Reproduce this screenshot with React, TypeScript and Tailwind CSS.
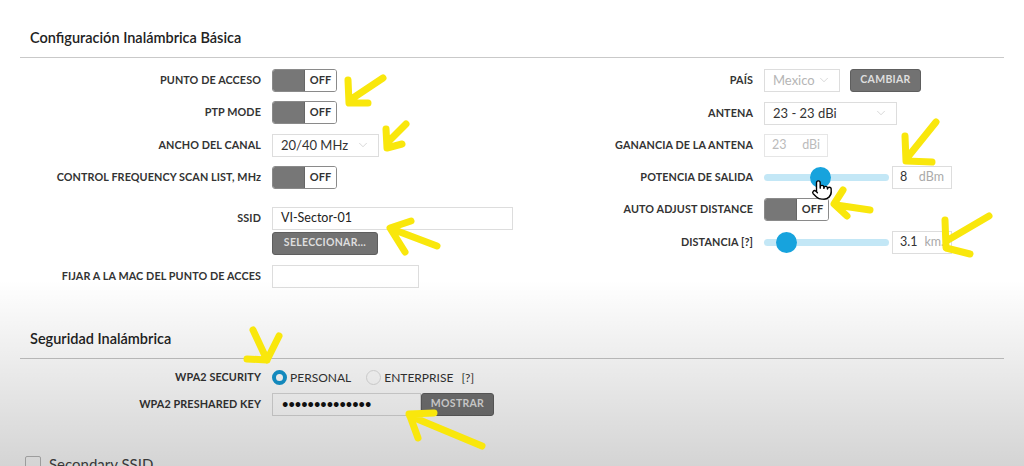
import React from 'react';
import { ChevronDown, Pointer } from 'lucide-react';

const Label: React.FC<{ w: string; children: React.ReactNode }> = ({ w, children }) => (
  <div className={`${w} shrink-0 text-right text-[10.8px] font-bold uppercase text-[#333] tracking-[0.1px]`}>{children}</div>
);

const Toggle: React.FC = () => (
  <div className="flex h-[23px] w-[65px] overflow-hidden rounded-[3px] border border-[#8a8a8a]">
    <div className="w-[32px] bg-[#777] border-r border-[#666]" />
    <div className="flex flex-1 items-center justify-center bg-white text-[11px] font-bold text-[#333]">OFF</div>
  </div>
);

const Select: React.FC<{ w: string; value: string; muted?: boolean }> = ({ w, value, muted }) => (
  <div className={`${w} flex h-[23px] items-center justify-between border border-[#ddd] bg-white pl-[8px] pr-[8px] text-[13px] ${muted ? 'text-[#b5b5b5]' : 'text-[#333]'}`}>
    <span>{value}</span>
    <ChevronDown size={14} strokeWidth={1} className="text-[#bbb]" />
  </div>
);

const Btn: React.FC<{ w: string; children: React.ReactNode }> = ({ w, children }) => (
  <div className={`${w} flex h-[23px] items-center justify-center rounded-[3px] border border-[#5e5e5e] bg-[#727272] text-[10.5px] font-bold uppercase tracking-[0.3px] text-[#dedede]`}>
    {children}
  </div>
);

const Slider: React.FC<{ pos: number }> = ({ pos }) => (
  <div className="relative flex h-[23px] w-[125px] items-center">
    <div className="h-[7px] w-full rounded-full bg-[#c3e7f6]" />
    <div
      className="absolute top-[1px] h-[21px] w-[21px] rounded-full bg-[#17a3dd]"
      style={{ left: pos }}
    />
  </div>
);

const UnitBox: React.FC<{ value: string; unit: string }> = ({ value, unit }) => (
  <div className="flex h-[23px] w-[60px] items-center justify-between border border-[#ddd] bg-white px-[7px] text-[12.5px]">
    <span className="text-[#333]">{value}</span>
    <span className="text-[#aaa]">{unit}</span>
  </div>
);

const App: React.FC = () => {
  return (
    <div className="relative h-[466px] w-[1024px] overflow-hidden bg-white font-['Lato',sans-serif] text-[#333]">
      {/* SECTION 1 */}
      <div className="mx-[20px] border-b-[1.5px] border-[#c9c9c9] pl-[10px] pt-[27px] pb-[8px] text-[14.5px] font-semibold text-[#222]">
        Configuración Inalámbrica Básica
      </div>

      <div className="flex">
        {/* LEFT COLUMN */}
        <div className="flex w-[520px] flex-col pl-[20px]">
          <div className="mt-[11px] flex items-center gap-[11px]">
            <Label w="w-[241px]">Punto de acceso</Label>
            <Toggle />
          </div>
          <div className="mt-[9px] flex items-center gap-[11px]">
            <Label w="w-[241px]">PTP Mode</Label>
            <Toggle />
          </div>
          <div className="mt-[10px] flex items-center gap-[11px]">
            <Label w="w-[241px]">Ancho del canal</Label>
            <Select w="w-[107px]" value="20/40 MHz" />
          </div>
          <div className="mt-[9px] flex items-center gap-[11px]">
            <Label w="w-[241px]">
              CONTROL FREQUENCY SCAN LIST, M<span className="normal-case">Hz</span>
            </Label>
            <Toggle />
          </div>
          <div className="mt-[18px] flex items-start gap-[11px]">
            <div className="flex h-[23px] items-center">
              <Label w="w-[241px]">SSID</Label>
            </div>
            <div className="flex flex-col gap-[2px]">
              <div className="flex h-[23px] w-[241px] items-center border border-[#ddd] bg-white px-[8px] text-[12.5px] text-[#222]">
                VI-Sector-01
              </div>
              <Btn w="w-[106px]">Seleccionar...</Btn>
            </div>
          </div>
          <div className="mt-[10px] flex items-center gap-[11px]">
            <Label w="w-[241px]">Fijar a la MAC del punto de acces</Label>
            <div className="h-[23px] w-[147px] border border-[#ddd] bg-white" />
          </div>
        </div>

        {/* RIGHT COLUMN */}
        <div className="flex flex-col">
          <div className="mt-[11px] flex items-center gap-[11px]">
            <Label w="w-[233px]">País</Label>
            <div className="flex items-center gap-[10px]">
              <Select w="w-[76px]" value="Mexico" muted />
              <Btn w="w-[71px]">Cambiar</Btn>
            </div>
          </div>
          <div className="mt-[10px] flex items-center gap-[11px]">
            <Label w="w-[233px]">Antena</Label>
            <Select w="w-[133px]" value="23 - 23 dBi" />
          </div>
          <div className="mt-[9px] flex items-center gap-[11px]">
            <Label w="w-[233px]">Ganancia de la antena</Label>
            <div className="flex h-[23px] w-[64px] items-center justify-between border border-[#e6e6e6] bg-white px-[7px] text-[12.5px] text-[#bbb]">
              <span>23</span>
              <span>dBi</span>
            </div>
          </div>
          <div className="mt-[9px] flex items-center gap-[11px]">
            <Label w="w-[233px]">Potencia de salida</Label>
            <div className="flex items-center gap-[3px]">
              <Slider pos={46} />
              <UnitBox value="8" unit="dBm" />
            </div>
          </div>
          <div className="mt-[9px] flex items-center gap-[11px]">
            <Label w="w-[233px]">Auto adjust distance</Label>
            <Toggle />
          </div>
          <div className="mt-[10px] flex items-center gap-[11px]">
            <Label w="w-[233px]">Distancia [?]</Label>
            <div className="flex items-center gap-[3px]">
              <Slider pos={12} />
              <UnitBox value="3.1" unit="km." />
            </div>
          </div>
        </div>
      </div>

      {/* SECTION 2 */}
      <div className="mx-[20px] mt-[40px] border-b-[1.5px] border-[#c4c4c4] pl-[10px] pb-[8px] text-[14.5px] font-semibold text-[#222]">
        Seguridad Inalámbrica
      </div>

      <div className="flex flex-col pl-[20px]">
        <div className="mt-[10px] flex items-center gap-[11px]">
          <Label w="w-[241px]">WPA2 Security</Label>
          <div className="flex items-center text-[12px] text-[#333]">
            <div className="h-[15px] w-[15px] rounded-full border-[4px] border-[#1596cf] bg-white" />
            <span className="ml-[3px]">PERSONAL</span>
            <div className="ml-[15px] h-[15px] w-[15px] rounded-full border border-[#ddd] bg-white" />
            <span className="ml-[3px]">ENTERPRISE</span>
            <span className="ml-[8px]">[?]</span>
          </div>
        </div>
        <div className="mt-[6px] flex items-center gap-[11px]">
          <Label w="w-[241px]">WPA2 Preshared key</Label>
          <div className="flex items-center">
            <div className="flex h-[23px] w-[149px] items-center border border-[#d8d8d8] bg-transparent px-[9px] text-[11px] font-bold text-[#111]">
              ••••••••••••••
            </div>
            <Btn w="w-[73px]">Mostrar</Btn>
          </div>
        </div>
        <div className="mt-[39px] flex items-start gap-[8px] pl-[5px]">
          <div className="mt-[1px] h-[16px] w-[16px] rounded-[2px] border border-[#bbb] bg-white" />
          <span className="text-[15px] leading-[18px] text-[#444]">Secondary SSID</span>
        </div>
      </div>

      {/* video fade */}
      <div className="pointer-events-none absolute inset-0 bg-[linear-gradient(to_bottom,rgba(0,0,0,0)_0%,rgba(0,0,0,0)_60%,rgba(0,0,0,0.17)_100%)]" />

      {/* cursor */}
      <Pointer size={22} strokeWidth={1.5} className="pointer-events-none absolute left-[811px] top-[179px] fill-white text-black" />

      {/* yellow annotations */}
      <svg className="pointer-events-none absolute inset-0" width="1024" height="466">
        <g fill="none" stroke="#f9e70c" strokeWidth="7" strokeLinecap="round" strokeLinejoin="round">
          <path d="M383 78 L350 100 M348 80 L349 103 L368 103" />
          <path d="M406 124 L388 142 M386 129 L387 148 L402 144" />
          <path d="M437 246 L392 229 M411 221 L390 228 L405 252" />
          <path d="M936 122 L907 158 M905 136 L906 161 L932 162" />
          <path d="M870 210 L836 205 M843 190 L834 204 L847 216" />
          <path d="M989 216 L948 240 M945 220 L946 248 L970 254" />
          <path d="M253 330 L267 360 M279 336 L267 360 M247 359 L267 360" />
          <path d="M482 446 L410 416 M409 414 L434 413 M410 416 L418 438" />
        </g>
      </svg>
    </div>
  );
};

export default App;
